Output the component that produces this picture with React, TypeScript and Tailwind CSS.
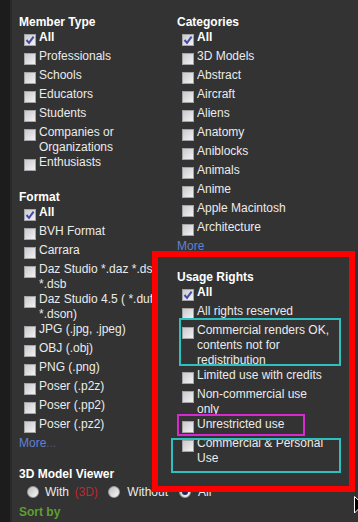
import { FC } from "react";

interface BoxProps {
    checked?: boolean;
}

const CheckBox: FC<BoxProps> = ({ checked }) => {
    return (
        <span className="mt-[4px] ml-[5px] mr-[3px] w-[12px] h-[12px] shrink-0 border border-[#a4a4a4] bg-linear-to-br from-[#c9c9cf] to-[#f3f3f3] flex items-center justify-center">
            {checked && (
                <svg width="10" height="10" viewBox="0 0 10 10">
                    <path d="M1.5 5 L4 7.8 L8.6 1.6" fill="none" stroke="#4848a8" strokeWidth="2" />
                </svg>
            )}
        </span>
    );
};

const Radio: FC<BoxProps> = ({ checked }) => {
    return (
        <span className="w-[12px] h-[12px] shrink-0 rounded-full border border-[#9a9a9a] bg-linear-to-br from-[#bdbdbd] to-[#fafafa] flex items-center justify-center">
            {checked && <span className="w-[6px] h-[6px] rounded-full bg-[#1c2b55]" />}
        </span>
    );
};

interface RowProps {
    label: string;
    checked?: boolean;
    width: string;
}

const Row: FC<RowProps> = ({ label, checked, width }) => {
    return (
        <div className="flex items-start min-h-[19px]">
            <CheckBox checked={checked} />
            <span className={`${width} ${checked ? "font-bold text-white" : ""}`}>{label}</span>
        </div>
    );
};

const memberTypes = ["Professionals", "Schools", "Educators", "Students", "Companies or Organizations", "Enthusiasts"];
const formats = [
    "BVH Format",
    "Carrara",
    "Daz Studio *.daz *.dsf *.dsb",
    "Daz Studio 4.5 ( *.duf *.dson)",
    "JPG (.jpg, .jpeg)",
    "OBJ (.obj)",
    "PNG (.png)",
    "Poser (.p2z)",
    "Poser (.pp2)",
    "Poser (.pz2)",
];
const categories = ["3D Models", "Abstract", "Aircraft", "Aliens", "Anatomy", "Aniblocks", "Animals", "Anime", "Apple Macintosh", "Architecture"];
const usageRights = [
    "All rights reserved",
    "Commercial renders OK, contents not for redistribution",
    "Limited use with credits",
    "Non-commercial use only",
    "Unrestricted use",
    "Commercial & Personal Use",
];

const App: FC = () => {
    return (
        <div className="relative flex w-[358px] h-[522px] overflow-hidden bg-[#333333] text-[#ebebeb] text-[12px] leading-[15px] font-['Liberation_Sans',Arial,sans-serif]">
            <div className="w-[10px] shrink-0 bg-[#1c1c1c]" />
            <div className="w-[2px] shrink-0 bg-[#292929]" />

            <div className="flex-1 pl-[7px] pt-[14px]">
                <div className="flex">
                    {/* left column */}
                    <div className="w-[158px] shrink-0">
                        <h3 className="font-bold text-white leading-[16px]">Member Type</h3>
                        <Row label="All" checked width="w-[138px]" />
                        {memberTypes.map((m) => (
                            <Row key={m} label={m} width="w-[138px]" />
                        ))}

                        <h3 className="mt-[15px] font-bold text-white leading-[16px]">Format</h3>
                        <Row label="All" checked width="w-[138px]" />
                        {formats.map((f) => (
                            <Row key={f} label={f} width="w-[138px]" />
                        ))}
                        <a className="block text-[#5f82d4]">
                            More<span className="text-[#4b5a78]">...</span>
                        </a>
                    </div>

                    {/* right column */}
                    <div className="w-[160px]">
                        <h3 className="font-bold text-white leading-[16px]">Categories</h3>
                        <Row label="All" checked width="w-[135px]" />
                        {categories.map((c) => (
                            <Row key={c} label={c} width="w-[135px]" />
                        ))}
                        <a className="block text-[#5f82d4]">More</a>

                        <h3 className="mt-[15px] font-bold text-white leading-[16px]">Usage Rights</h3>
                        <Row label="All" checked width="w-[135px]" />
                        {usageRights.map((u) => (
                            <Row key={u} label={u} width="w-[135px]" />
                        ))}
                    </div>
                </div>

                <h3 className="font-bold text-white leading-[16px]">3D Model Viewer</h3>
                <div className="flex items-center h-[20px]">
                    <span className="ml-[8px]"><Radio /></span>
                    <span className="ml-[6px]">With</span>
                    <span className="ml-[6px] text-[#c42a30] blur-[0.5px]">(3D)</span>
                    <span className="ml-[10px]"><Radio /></span>
                    <span className="ml-[7px]">Without</span>
                    <span className="ml-[11px]"><Radio checked /></span>
                    <span className="ml-[7px]">All</span>
                </div>
                <div className="mt-[2px] font-bold text-[#5f9e32] leading-[16px]">Sort by</div>
            </div>

            {/* annotations */}
            <div className="absolute left-[152px] top-[251px] w-[203px] h-[241px] border-[6px] border-[#ff0000]" />
            <div className="absolute left-[179px] top-[318px] w-[162px] h-[48px] border-2 border-[#2cc0c0]" />
            <div className="absolute left-[177px] top-[414px] w-[128px] h-[22px] border-2 border-[#d62ad0]" />
            <div className="absolute left-[171px] top-[438px] w-[170px] h-[35px] border-2 border-[#2cc0c0]" />

            <svg className="absolute left-[354px] top-[496px]" width="14" height="22" viewBox="0 0 14 22">
                <path d="M0.5 0.5 L0.5 17 L4.5 13 L7.5 20 L10 19 L7 12 L12.5 12 Z" fill="#000" stroke="#fff" strokeWidth="1" />
            </svg>
        </div>
    );
};

export default App;
